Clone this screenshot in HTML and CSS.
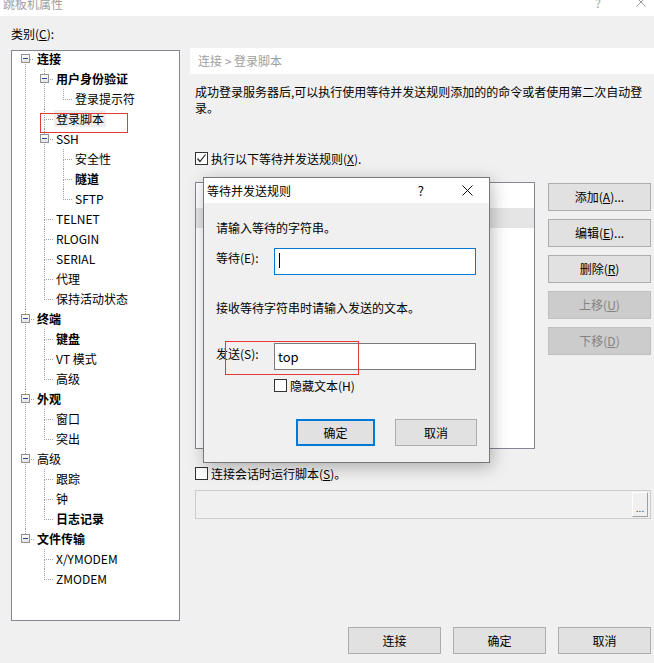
FILE: index.html
```html
<!DOCTYPE html>
<html lang="zh-CN">
<head>
<meta charset="UTF-8">
<title>跳板机属性</title>
<link rel="stylesheet" href="styles.css">
</head>
<body>

<div class="titlebar">
    <span class="title">跳板机属性</span>
    <span class="tb-help">?</span>
    <svg class="tb-close" width="10" height="10" viewBox="0 0 10 10"><path d="M0.5 0.5L9.5 9.5M9.5 0.5L0.5 9.5" stroke="#9a9a9a" stroke-width="1" fill="none"/></svg>
</div>

<div class="main">
    <div class="left">
        <div class="cat-label">类别(<u>C</u>):</div>
        <div class="tree-box">
            <ul class="tree">
                <li><div class="node"><span class="tog"></span><b>连接</b></div>
                    <ul>
                        <li><div class="node"><span class="tog"></span><b>用户身份验证</b></div>
                            <ul>
                                <li><div class="node">登录提示符</div></li>
                            </ul>
                        </li>
                        <li><div class="node"><span class="sel">登录脚本</span></div></li>
                        <li><div class="node"><span class="tog"></span>SSH</div>
                            <ul>
                                <li><div class="node">安全性</div></li>
                                <li><div class="node"><b>隧道</b></div></li>
                                <li><div class="node">SFTP</div></li>
                            </ul>
                        </li>
                        <li><div class="node">TELNET</div></li>
                        <li><div class="node">RLOGIN</div></li>
                        <li><div class="node">SERIAL</div></li>
                        <li><div class="node">代理</div></li>
                        <li><div class="node">保持活动状态</div></li>
                    </ul>
                </li>
                <li><div class="node"><span class="tog"></span><b>终端</b></div>
                    <ul>
                        <li><div class="node"><b>键盘</b></div></li>
                        <li><div class="node">VT 模式</div></li>
                        <li><div class="node">高级</div></li>
                    </ul>
                </li>
                <li><div class="node"><span class="tog"></span><b>外观</b></div>
                    <ul>
                        <li><div class="node">窗口</div></li>
                        <li><div class="node">突出</div></li>
                    </ul>
                </li>
                <li><div class="node"><span class="tog"></span>高级</div>
                    <ul>
                        <li><div class="node">跟踪</div></li>
                        <li><div class="node">钟</div></li>
                        <li><div class="node"><b>日志记录</b></div></li>
                    </ul>
                </li>
                <li><div class="node"><span class="tog"></span><b>文件传输</b></div>
                    <ul>
                        <li><div class="node">X/YMODEM</div></li>
                        <li><div class="node">ZMODEM</div></li>
                    </ul>
                </li>
            </ul>
        </div>
    </div>

    <div class="right">
        <div class="crumb">连接 &gt; 登录脚本</div>
        <div class="desc">成功登录服务器后,可以执行使用等待并发送规则添加的的命令或者使用第二次自动登录。</div>

        <div class="check-row first">
            <span class="cb"><svg width="11" height="11" viewBox="0 0 11 11"><path d="M1.5 5.5L4 8.5L9.5 1.5" stroke="#222" stroke-width="1.2" fill="none"/></svg></span>
            执行以下等待并发送规则(<u>X</u>).
        </div>

        <div class="rules">
            <div class="list">
                <div class="list-blank"></div>
                <div class="list-row"></div>
            </div>
            <div class="side-btns">
                <div class="btn">添加(<u>A</u>)...</div>
                <div class="btn">编辑(<u>E</u>)...</div>
                <div class="btn">删除(<u>R</u>)</div>
                <div class="btn off">上移(<u>U</u>)</div>
                <div class="btn off">下移(<u>D</u>)</div>
            </div>
        </div>

        <div class="check-row second">
            <span class="cb"></span>
            连接会话时运行脚本(<u>S</u>)。
        </div>

        <div class="path">
            <div class="path-btn">...</div>
        </div>
    </div>
</div>

<div class="footer">
    <div class="btn wide">连接</div>
    <div class="btn wide">确定</div>
    <div class="btn wide">取消</div>
</div>

<!-- 弹出的对话框 -->
<div class="dialog">
    <div class="dlg-title">
        <span>等待并发送规则</span>
        <span class="dlg-help">?</span>
        <svg class="dlg-close" width="11" height="11" viewBox="0 0 11 11"><path d="M0.5 0.5L10.5 10.5M10.5 0.5L0.5 10.5" stroke="#111" stroke-width="1" fill="none"/></svg>
    </div>
    <div class="dlg-body">
        <div class="dlg-text t1">请输入等待的字符串。</div>
        <div class="field f1">
            <span class="field-label">等待(E):</span>
            <div class="input focus"><span class="caret"></span></div>
        </div>
        <div class="dlg-text t2">接收等待字符串时请输入发送的文本。</div>
        <div class="field f2">
            <span class="field-label">发送(S):</span>
            <div class="input">top</div>
        </div>
        <div class="hide-row">
            <span class="cb"></span>隐藏文本(H)
        </div>
        <div class="dlg-btns">
            <div class="btn ok">确定</div>
            <div class="btn cancel">取消</div>
        </div>
    </div>
</div>

<!-- 红色标注框 -->
<div class="mark mark-tree"></div>
<div class="mark mark-send"></div>

</body>
</html>
```

FILE: styles.css
```css
* { box-sizing: border-box; }
body {
    margin: 0;
    width: 654px;
    height: 663px;
    overflow: hidden;
    position: relative;
    background-color: #f0f0f0;
    color: #000;
    font-family: "Noto Sans CJK SC", "Liberation Sans", sans-serif;
    font-size: 12px;
}
u { text-decoration: underline; text-underline-offset: 1px; }

.titlebar {
    height: 16px;
    background: #fff;
    display: flex;
    align-items: flex-start;
    color: #a0a0a0;
    overflow: hidden;
}
.title { margin: -4px 0 0 3px; line-height: 16px; }
.tb-help { margin: -5px 0 0 auto; width: 12px; text-align: center; line-height: 16px; }
.tb-close { margin: -3px 8px 0 32px; }

.main { display: flex; padding-left: 11px; }
.left { width: 169px; padding-top: 10px; }
.cat-label { line-height: 16px; }
.tree-box {
    margin-top: 8px;
    height: 571px;
    border: 1px solid #828790;
    background: #fff;
    overflow: hidden;
}

/* tree */
.tree, .tree ul { list-style: none; margin: 0; }
.tree { padding: 0 0 0 25px; margin-top: -2px; }
.tree ul { padding-left: 19px; }
.tree li { position: relative; }
.tree li::before {
    content: '';
    position: absolute;
    left: -12px;
    top: 0;
    width: 8px;
    height: 10px;
    border-left: 1px dotted #a0a0a0;
    border-bottom: 1px dotted #a0a0a0;
}
.tree li::after {
    content: '';
    position: absolute;
    left: -12px;
    top: 10px;
    bottom: 0;
    border-left: 1px dotted #a0a0a0;
}
.tree li:last-child::after { display: none; }
.tree > li:first-child::before { top: 10px; height: 0; border-left: none; }
.node { height: 20px; line-height: 20px; white-space: nowrap; position: relative; }
.node b { font-weight: 700; }
.tog {
    position: absolute;
    left: -16px;
    top: 5px;
    width: 9px;
    height: 9px;
    border: 1px solid #919191;
    background: linear-gradient(#fff, #e4e4e4);
    z-index: 1;
}
.tog::after {
    content: '';
    position: absolute;
    left: 1px;
    top: 3px;
    width: 5px;
    height: 1px;
    background: #2a4a96;
}
.sel { background: #eeeeee; padding: 0 2px; margin-left: -2px; }

/* right panel */
.right { flex: 1; margin-left: 10px; padding-top: 32px; }
.crumb {
    height: 26px;
    line-height: 26px;
    background: #fff;
    padding-left: 8px;
    color: #a0a0a0;
}
.desc { margin-top: 10px; line-height: 16px; padding: 0 3px 0 5px; }
.check-row {
    display: flex;
    align-items: center;
    height: 16px;
    padding-left: 5px;
}
.check-row.first { margin-top: 34px; }
.check-row.second { margin-top: 16px; }
.cb {
    width: 13px;
    height: 13px;
    border: 1px solid #333;
    background: #fff;
    margin-right: 3px;
    display: flex;
    align-items: center;
    justify-content: center;
    flex-shrink: 0;
}

.rules { display: flex; margin-top: 16px; padding: 0 3px 0 5px; height: 267px; }
.list { width: 340px; border: 1px solid #828790; background: #fff; }
.list-blank { height: 25px; }
.list-row { height: 20px; background: #e5e5e5; }
.side-btns {
    margin-left: 13px;
    width: 103px;
    display: flex;
    flex-direction: column;
    gap: 8px;
    padding-top: 1px;
}
.btn {
    height: 28px;
    line-height: 26px;
    border: 1px solid #adadad;
    background: #e1e1e1;
    text-align: center;
}
.btn.off { background: #cccccc; border-color: #bfbfbf; color: #838383; }

.path {
    margin: 9px 3px 0 5px;
    height: 29px;
    border: 1px solid #cccccc;
    background: #f0f0f0;
    display: flex;
    justify-content: flex-end;
    padding: 1px 2px 1px 0;
}
.path-btn {
    width: 16px;
    border-left: 1px solid #fff;
    border-top: 1px solid #fff;
    border-right: 1px solid #a0a0a0;
    border-bottom: 1px solid #a0a0a0;
    font-size: 10px;
    line-height: 30px;
    text-align: center;
    color: #333;
}

.footer {
    display: flex;
    justify-content: flex-end;
    gap: 12px;
    padding-right: 3px;
    margin-top: 6px;
}
.btn.wide { width: 93px; height: 27px; line-height: 25px; }

/* dialog */
.dialog {
    position: absolute;
    left: 203px;
    top: 177px;
    width: 287px;
    height: 286px;
    border: 1px solid #777;
    background: #f0f0f0;
    box-shadow: 2px 4px 16px rgba(0, 0, 0, 0.28);
}
.dlg-title {
    height: 25px;
    background: #fff;
    display: flex;
    align-items: center;
    padding-left: 3px;
}
.dlg-help { margin-left: auto; font-size: 13px; }
.dlg-close { margin: 0 16px 0 38px; }
.dlg-body { padding: 0 12px; }
.dlg-text { line-height: 16px; }
.dlg-text.t1 { margin-top: 17px; }
.dlg-text.t2 { margin-top: 25px; }
.field { display: flex; align-items: flex-start; }
.field.f1 { margin-top: 12px; }
.field.f2 { margin-top: 27px; }
.field-label { width: 58px; line-height: 16px; margin-top: 2px; }
.f2 .field-label { margin-top: 3px; }
.input {
    width: 202px;
    height: 27px;
    border: 1px solid #7a7a7a;
    background: #fff;
    padding-left: 3px;
    line-height: 25px;
    font-size: 13px;
}
.input.focus { border-color: #0078d7; }
.caret { display: block; width: 1px; height: 15px; background: #000; margin: 4px 0 0 1px; }
.hide-row {
    display: flex;
    align-items: center;
    height: 13px;
    margin-top: 9px;
    padding-left: 58px;
}
.hide-row .cb { margin-right: 3px; }
.dlg-btns { display: flex; justify-content: flex-end; gap: 20px; margin-top: 27px; }
.dlg-btns .btn { height: 27px; line-height: 25px; }
.btn.ok { width: 79px; border: 2px solid #0078d7; line-height: 23px; }
.btn.cancel { width: 82px; }

/* red annotation boxes */
.mark { position: absolute; border: 1px solid #e53935; }
.mark-tree { left: 40px; top: 113px; width: 88px; height: 20px; }
.mark-send { left: 225px; top: 341px; width: 134px; height: 34px; }
```
